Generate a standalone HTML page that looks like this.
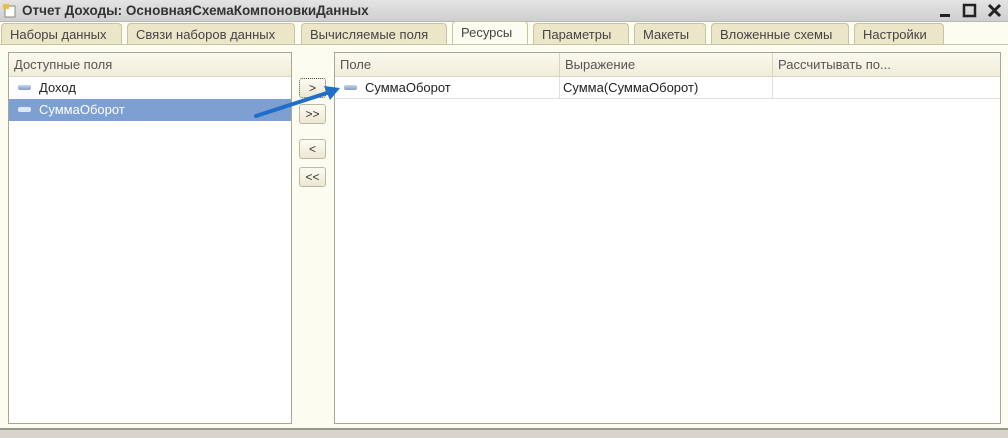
<!DOCTYPE html><html><head><meta charset="utf-8"><style>
*{box-sizing:border-box;margin:0;padding:0}
body{width:1008px;height:438px;overflow:hidden;background:#fdfcf0;font-family:"Liberation Sans",sans-serif;font-size:13px;color:#222;position:relative}
.abs{position:absolute}
#title{left:0;top:0;width:1008px;height:22px;background:linear-gradient(#e4e4e4,#cfcfcf);border-bottom:1px solid #b8b8b8}
#title span{position:absolute;left:22px;top:3px;font-weight:bold;font-size:13.5px;color:#333}
.tab{position:absolute;top:23px;height:21px;background:#ece6c8;border:1px solid #c9c2a4;border-bottom:none;border-radius:4px 4px 0 0;padding:3px 8px 0 8px;color:#444}
.tab.act{background:#fdfcf0;top:21px;height:24px}
.panel{position:absolute;background:#fff;border:1px solid #a9a692}
.hdr{position:absolute;left:0;top:0;height:24px;background:linear-gradient(#fbf9ef,#f1edda);border-bottom:1px solid #d8d4c0;color:#555;padding:4px 5px;white-space:nowrap}
.row{position:absolute;height:22px;padding:3px 0 0 30px}
.ico{position:absolute;left:9px;top:8px;width:13px;height:5px;border-radius:2px;background:linear-gradient(#c7d5ea,#7f9cc6)}
.btn{position:absolute;left:299px;width:27px;height:20px;background:linear-gradient(#fdfcf3,#ece7d2);border:1px solid #bdb8a2;border-radius:3px;text-align:center;font-size:12px;line-height:18px;color:#333}
</style></head><body>
<div id="title" class="abs"><svg class="abs" style="left:3px;top:3px" width="15" height="15"><rect x="2" y="3" width="10" height="11" fill="#fff" stroke="#888"/><rect x="0" y="1" width="6" height="5" fill="#e8c040"/></svg><span>Отчет Доходы: ОсновнаяСхемаКомпоновкиДанных</span>
<svg class="abs" style="left:938px;top:3px" width="66" height="16"><rect x="2" y="11" width="10" height="3" fill="#222"/><rect x="26" y="2" width="11" height="11" fill="none" stroke="#222" stroke-width="2.5"/><path d="M51 2 L62 13 M62 2 L51 13" stroke="#222" stroke-width="3"/></svg></div>
<div class="tab" style="left:1px;width:121px">Наборы данных</div>
<div class="tab" style="left:127px;width:168px">Связи наборов данных</div>
<div class="tab" style="left:301px;width:146px">Вычисляемые поля</div>
<div class="tab act" style="left:452px;width:76px">Ресурсы</div>
<div class="tab" style="left:533px;width:96px">Параметры</div>
<div class="tab" style="left:634px;width:72px">Макеты</div>
<div class="tab" style="left:711px;width:138px">Вложенные схемы</div>
<div class="tab" style="left:854px;width:90px">Настройки</div>
<div class="abs" style="left:0;top:44px;width:1008px;height:1px;background:#c9c2a4"></div>
<div class="panel" style="left:8px;top:52px;width:284px;height:372px">
<div class="hdr" style="width:282px">Доступные поля</div>
<div class="row" style="top:24px;width:282px"><i class="ico"></i>Доход</div>
<div class="row" style="top:46px;width:282px;background:#7d9fd1;color:#fff"><i class="ico" style="background:#dfe7f3"></i>СуммаОборот</div>
</div>
<div class="btn" style="top:78px;border:1px dotted #555">&gt;</div>
<div class="btn" style="top:104px">&gt;&gt;</div>
<div class="btn" style="top:139px">&lt;</div>
<div class="btn" style="top:167px">&lt;&lt;</div>
<div class="panel" style="left:334px;top:52px;width:667px;height:372px">
<div class="hdr" style="width:224px">Поле</div>
<div class="hdr" style="left:224px;width:213px;border-left:1px solid #d8d4c0">Выражение</div>
<div class="hdr" style="left:437px;width:228px;border-left:1px solid #d8d4c0">Рассчитывать по...</div>
<div class="row" style="top:24px;width:665px;border-bottom:1px solid #e2e0d8"><i class="ico"></i>СуммаОборот</div>
<div class="abs" style="left:228px;top:27px;font-size:13px">Сумма(СуммаОборот)</div>
<div class="abs" style="left:224px;top:24px;width:1px;height:22px;background:#e2e0d8"></div>
<div class="abs" style="left:437px;top:24px;width:1px;height:22px;background:#e2e0d8"></div>
</div>
<svg class="abs" style="left:250px;top:80px" width="100" height="45"><path d="M6 36 L80 12" stroke="#1f6fc8" stroke-width="4" stroke-linecap="round"/><path d="M90 8 L74 6 L80 20 Z" fill="#1f6fc8"/></svg>
<div class="abs" style="left:0;top:428px;width:1008px;height:10px;background:#d6d4cc;border-top:2px solid #9a988a"></div>
</body></html>
